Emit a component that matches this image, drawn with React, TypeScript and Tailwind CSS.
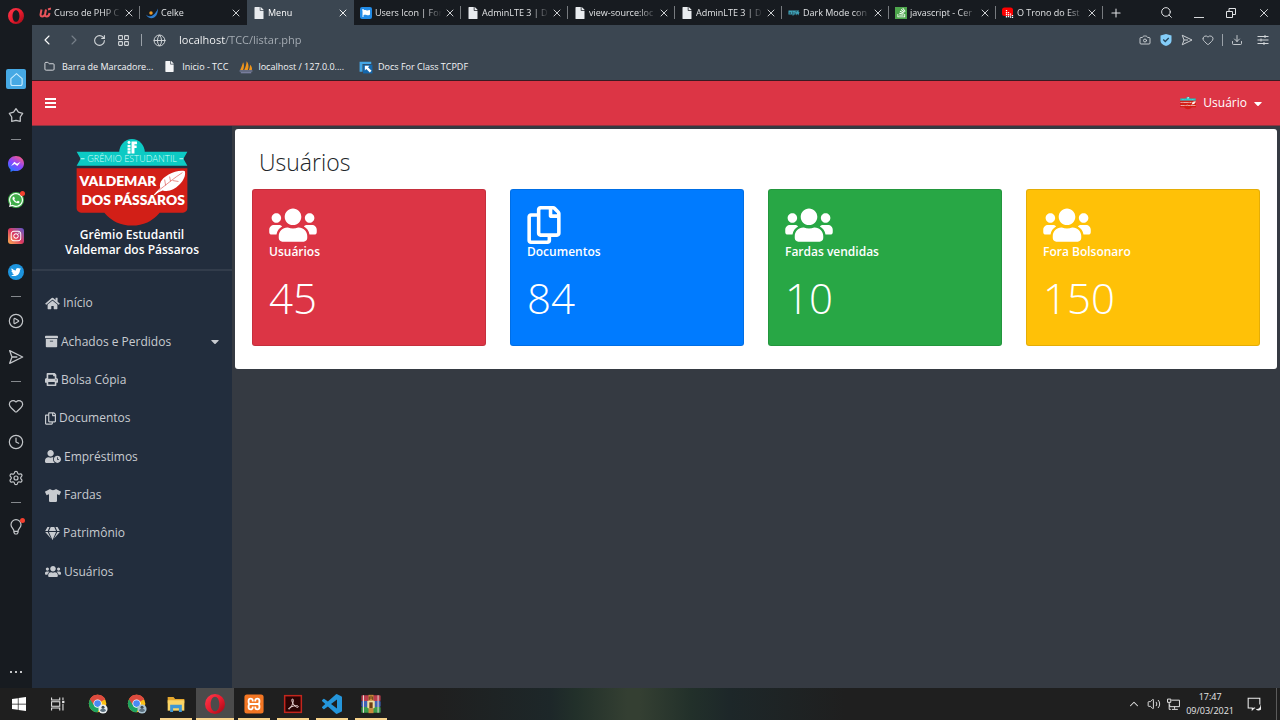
import type { ReactNode } from "react";
import {
  FaArchive,
  FaCaretDown,
  FaFile,
  FaFlag,
  FaGem,
  FaHome,
  FaInstagram,
  FaPrint,
  FaRegCopy,
  FaStackOverflow,
  FaTshirt,
  FaTwitter,
  FaUserClock,
  FaUsers,
  FaWhatsapp,
} from "react-icons/fa";
import {
  Camera,
  ChevronLeft,
  ChevronRight,
  ChevronUp,
  CirclePlay,
  Clock,
  Download,
  Folder,
  Globe,
  Heart,
  LayoutGrid,
  Plus,
  RotateCw,
  Search,
  Settings,
  Volume2,
  X,
} from "lucide-react";

/* ---------- drawings ---------- */

function OperaLogo({ className }: { className: string }) {
  return (
    <svg viewBox="0 0 24 24" className={className} aria-hidden="true">
      <defs>
        <linearGradient id="operaRed" x1="0" y1="0" x2="1" y2="1">
          <stop offset="0" stopColor="#ff3b4e" />
          <stop offset="0.5" stopColor="#ea1c2f" />
          <stop offset="1" stopColor="#9c0914" />
        </linearGradient>
      </defs>
      <path
        fillRule="evenodd"
        fill="url(#operaRed)"
        d="M12 0a12 12 0 1 0 0 24a12 12 0 0 0 0-24ZM12 3.2c3 0 5.2 3.800 5.200 8.800s-2.200 8.800-5.200 8.800s-5.200-3.800-5.200-8.800s2.200-8.800 5.200-8.800Z"
      />
    </svg>
  );
}

function GremioLogo({ className }: { className: string }) {
  return (
    <svg viewBox="0 0 112 90" className={className} role="img" aria-label="Grêmio Estudantil Valdemar dos Pássaros">
      <path d="M43 15a13 14 0 0 1 26 0Z" fill="#0ccac4" />
      <path d="M0 14h112l-4 7l4 7H0l4-7Z" fill="#0ccac4" />
      <path d="M4 21h4M104 21h4" stroke="#c9fffb" strokeWidth="1" />
      <g fill="#fff">
        <circle cx="53" cy="4.500" r="1.500" />
        <rect x="51.500" y="7" width="3" height="2.500" />
        <rect x="51.500" y="10.200" width="3" height="2.500" />
        <rect x="51.500" y="13.300" width="3" height="2.500" />
        <path d="M55.500 3.500h5.500v2.700h-2.500v1.300h2.200v2.500h-2.200v5.800h-3Z" />
      </g>
      <text x="56" y="24.500" textAnchor="middle" fontSize="9" fontWeight="300" fill="#d9fffc" className="font-['Lato',sans-serif]">
        GRÊMIO ESTUDANTIL
      </text>
      <path d="M0 30.500h112V71a4.500 4.500 0 0 1-4.500 4.500H84Q73 88.500 56 88.500T28 75.500H4.500A4.500 4.500 0 0 1 0 71Z" fill="#d21f17" />
      <text x="3" y="48.500" fontSize="14" fontWeight="800" fill="#fff" className="font-['Lato','Open_Sans',sans-serif]">
        VALDEMAR
      </text>
      <text x="5" y="68" fontSize="14" fontWeight="800" fill="#fff" className="font-['Lato','Open_Sans',sans-serif]">
        DOS PÁSSAROS
      </text>
      <path
        fill="#fff"
        d="M78 57.500C81 54 83 52 84.500 50.500C83 44 88 40 93 37C98 34 105 32.500 109.500 33.500C110.500 38 108 43 104 47C99 52 93 55 87 53C84 54 81 56 79 58Z"
      />
      <path d="M83 53C91 47 99 40 107 35M90 48l-1-6M95 44l-1-5M97 43l6 1" stroke="#d21f17" strokeWidth=".5" fill="none" />
    </svg>
  );
}

function MessengerIcon() {
  return (
    <svg viewBox="0 0 24 24" className="size-4" aria-hidden="true">
      <defs>
        <linearGradient id="msgr" x1="0.200" y1="1" x2="0.800" y2="0">
          <stop offset="0" stopColor="#1a7cff" />
          <stop offset="0.500" stopColor="#8a46ff" />
          <stop offset="1" stopColor="#ff5c80" />
        </linearGradient>
      </defs>
      <path d="M12 0C5.200 0 0 5 0 11.600c0 3.500 1.400 6.500 3.800 8.500V24l3.700-2c1.400.4 2.900.6 4.500.6c6.800 0 12-4.900 12-11.300S18.800 0 12 0Z" fill="url(#msgr)" />
      <path d="M4.500 15l5-6.500l4 3l5.500-3l-5 6.500l-4-3Z" fill="#fff" />
    </svg>
  );
}

function StarOutline() {
  return (
    <svg viewBox="0 0 24 24" className="size-4" fill="none" stroke="currentColor" strokeWidth="1.900" strokeLinejoin="round" aria-hidden="true">
      <path d="M12 2.500l3.600 5.200l6.400 1.800l-3.600 5.500v6.500l-6.400-1.400l-6.400 1.400v-6.500L2 9.500l6.400-1.800Z" />
    </svg>
  );
}

function SendOutline({ className }: { className: string }) {
  return (
    <svg viewBox="0 0 24 24" className={className} fill="none" stroke="currentColor" strokeWidth="1.900" strokeLinejoin="round" aria-hidden="true">
      <path d="M2.500 2.500L22 12L2.500 21.500L6 12ZM6 12h8" />
    </svg>
  );
}

function BulbOutline() {
  return (
    <svg viewBox="0 0 24 24" className="size-4" fill="none" stroke="currentColor" strokeWidth="1.800" strokeLinejoin="round" aria-hidden="true">
      <path d="M9 18.500C9 15 4.500 13 4.500 8.500a7.500 7.500 0 0 1 15 0C19.500 13 15 15 15 18.500Z" />
      <path d="M9 18.500v2l1.500 2h3l1.500-2v-2" />
    </svg>
  );
}

function ShieldCheck() {
  return (
    <svg viewBox="0 0 24 24" className="size-3" aria-hidden="true">
      <path d="M12 0L23 3v10c0 6-5 9-11 11C6 22 1 19 1 13V3Z" fill="#84cdf8" />
      <path d="M6.500 11l4 4l7-7" fill="none" stroke="#26455c" strokeWidth="2.500" />
    </svg>
  );
}

function EasySetup() {
  return (
    <svg viewBox="0 0 24 24" className="size-3" fill="none" stroke="currentColor" strokeWidth="2" aria-hidden="true">
      <path d="M1 5h22M1 12h22M1 19h22M16 2v6M8 9v6M14 16v6" />
    </svg>
  );
}

function UdemyIcon() {
  return (
    <svg viewBox="0 0 24 24" className="size-3" fill="none" stroke="#e8545a" strokeWidth="4" aria-hidden="true">
      <path d="M5 5L3 15q0 4 3.500 4q4 0 5.500-5l2-9M14 6l-2 9q0 4 3.500 4q4.500 0 5.500-7M18 5l6-2" />
    </svg>
  );
}

function CelkeIcon() {
  return (
    <svg viewBox="0 0 24 24" className="size-3" aria-hidden="true">
      <path d="M0 15C5 21 16 21 24 3C24 14 19 23 10 22.500C5 22 2 19 0 15Z" fill="#2f7fd0" />
      <circle cx="10" cy="12" r="3.500" fill="#ee9a25" />
    </svg>
  );
}

function ChromeIcon({ badge }: { badge: string }) {
  return (
    <svg viewBox="0 0 24 24" className="size-5" aria-hidden="true">
      <circle cx="11.500" cy="11.500" r="10.500" fill="#fbc116" />
      <path d="M11.500 11.500L2.400 6.300A10.500 10.500 0 0 1 20.600 6.300Z" fill="#dd4b3e" />
      <path d="M11.500 11.500L2.400 6.300A10.500 10.500 0 0 0 11.500 22l4-7Z" fill="#1da462" />
      <path d="M11.500 6.500h9.200A10.500 10.500 0 0 0 2.400 6.300l4.500 7Z" fill="#dd4b3e" />
      <circle cx="11.500" cy="11.500" r="5" fill="#fff" />
      <circle cx="11.500" cy="11.500" r="4" fill="#4a8af4" />
      <circle cx="18" cy="18" r="5.500" fill={badge} />
      <path d="M14.500 20c0-3 7-3 7 0a5 5 0 0 1-7 0Z" fill="#5c7180" />
      <circle cx="18" cy="16" r="1.800" fill="#394954" />
    </svg>
  );
}

function ExplorerIcon() {
  return (
    <svg viewBox="0 0 24 24" className="size-5" aria-hidden="true">
      <path d="M2 3.500h7l2 2.500h11v5H2Z" fill="#e5a72d" />
      <path d="M2 7.500h20V20H2Z" fill="#fbd566" />
      <path d="M5 21.500V13h14v8.500h-3.500V17h-7v4.500Z" fill="#3f97d3" />
    </svg>
  );
}

function XamppIcon() {
  return (
    <svg viewBox="0 0 24 24" className="size-5" aria-hidden="true">
      <rect x="0.500" y="0.500" width="23" height="23" rx="3" fill="#f37623" />
      <path
        d="M10.500 9V8a2.500 2.500 0 0 0-5 0v1.500Q5.500 12 8 12Q5.500 12 5.500 14.500V16a2.500 2.500 0 0 0 5 0v-1M13.500 9V8a2.500 2.500 0 0 1 5 0v1.500Q18.500 12 16 12Q18.500 12 18.500 14.500V16a2.500 2.500 0 0 1-5 0v-1M8 12h8"
        fill="none"
        stroke="#fff"
        strokeWidth="2.200"
      />
    </svg>
  );
}

function AcrobatIcon() {
  return (
    <svg viewBox="0 0 24 24" className="size-5" fill="none" aria-hidden="true">
      <rect x="2" y="2" width="20" height="20" fill="#2b0404" stroke="#c3261d" strokeWidth="1.800" />
      <path
        d="M11.500 6c-1.500 0-1 3 .5 5.500s4 4.500 5.500 4.500s1.200-2-1-2s-6 .8-8 2s-2.300 2.500-1 2c2-1 4.500-6.500 4.800-9.500c.1-1.600-.2-2.500-.8-2.500Z"
        stroke="#f1dada"
        strokeWidth="1.200"
      />
    </svg>
  );
}

function VSCodeIcon() {
  return (
    <svg viewBox="0 0 24 24" className="size-5" fill="#2596db" aria-hidden="true">
      <path d="M23.150 2.587L18.210.210a1.494 1.494 0 0 0-1.705.290l-9.460 8.630l-4.120-3.128a.999.999 0 0 0-1.276.057L.327 7.261A1 1 0 0 0 .326 8.740L3.899 12L.326 15.260a1 1 0 0 0 .001 1.479L1.650 17.940a.999.999 0 0 0 1.276.057l4.120-3.128l9.460 8.630a1.492 1.492 0 0 0 1.704.290l4.942-2.377A1.500 1.500 0 0 0 24 20.060V3.939a1.500 1.500 0 0 0-.850-1.352zm-5.146 14.861L10.826 12l7.178-5.448v10.896z" />
    </svg>
  );
}

function WinrarIcon() {
  return (
    <svg viewBox="0 0 24 24" className="size-5" aria-hidden="true">
      <rect x="0.500" y="1.500" width="23" height="7" rx="1" fill="#b93b4d" />
      <rect x="0.500" y="8.500" width="23" height="7" rx="1" fill="#3f62b5" />
      <rect x="0.500" y="15.500" width="23" height="7" rx="1" fill="#3b9b4c" />
      <path d="M3 1.500v21M20.500 1.500v21" stroke="#e4d6cf" strokeWidth="1.200" />
      <rect x="9" y="1" width="6" height="22" fill="#c98a3a" />
      <rect x="7.500" y="8" width="9" height="9" rx="1" fill="#f0dca0" />
      <path d="M10 7v-4M12 6v-4M14 7v-4" stroke="#573417" strokeWidth="1" />
      <rect x="10" y="10" width="4" height="7" fill="#6f3f12" />
    </svg>
  );
}

function WindowsIcon() {
  return (
    <svg viewBox="0 0 24 24" className="size-[14px]" fill="#fff" aria-hidden="true">
      <path d="M0 3.500L10 2v9.500H0ZM11.200 1.800L24 0v11.500H11.200ZM0 12.700h10V22L0 20.600ZM11.200 12.700H24V24l-12.800-1.800Z" />
    </svg>
  );
}

function TaskViewIcon() {
  return (
    <svg viewBox="0 0 24 24" className="size-[14px]" fill="none" stroke="#e8e8e8" strokeWidth="1.800" aria-hidden="true">
      <path d="M1 1v4h14V1M1 23v-4h14v4M1 8h14v8H1ZM20.500 1v4M20.500 12v11" />
      <rect x="19" y="6.500" width="4" height="4" fill="#e8e8e8" stroke="none" />
    </svg>
  );
}

function NetworkIcon() {
  return (
    <svg viewBox="0 0 24 24" className="size-[13px]" fill="none" stroke="currentColor" strokeWidth="1.800" aria-hidden="true">
      <path d="M8 4h15v12H5v-4M14 16v4M9 21h11M1 2h6v6H1ZM4 8v13h3" />
    </svg>
  );
}

function NotificationIcon() {
  return (
    <svg viewBox="0 0 24 24" className="size-[14px]" aria-hidden="true">
      <path d="M14 19h-2l-3 3v-3H2V2h20v11" fill="none" stroke="#eee" strokeWidth="1.800" />
      <path d="M23 13a5.500 5.500 0 1 1-8 7a6 6 0 0 0 8-7Z" fill="#eee" />
    </svg>
  );
}

/* ---------- data ---------- */

type Tab = { title: string; icon: ReactNode; active?: boolean };

const pageIcon = <FaFile className="size-3 text-[#e9ecef]" />;

const tabs: Tab[] = [
  { title: "Curso de PHP C", icon: <UdemyIcon /> },
  { title: "Celke", icon: <CelkeIcon /> },
  { title: "Menu", icon: pageIcon, active: true },
  {
    title: "Users Icon | For",
    icon: (
      <span className="flex size-3 items-center justify-center rounded-[2px] bg-[#228be6]">
        <FaFlag className="size-2 text-white" />
      </span>
    ),
  },
  { title: "AdminLTE 3 | D", icon: pageIcon },
  { title: "view-source:loc", icon: pageIcon },
  { title: "AdminLTE 3 | D", icon: pageIcon },
  {
    title: "Dark Mode con",
    icon: (
      <svg viewBox="0 0 24 24" className="size-3" fill="none" stroke="#3fa3b8" strokeWidth="2.200" aria-hidden="true">
        <path d="M7 7v7H2v-4h5M10 17v-7h4v4h-4M16 10l1.500 4l1.500-4l1.500 4L22 10M1 8h21" />
      </svg>
    ),
  },
  {
    title: "javascript - Cer",
    icon: (
      <span className="flex size-3 items-center justify-center bg-[#4da64c]">
        <FaStackOverflow className="size-[11px] text-white" />
      </span>
    ),
  },
  {
    title: "O Trono do Est",
    icon: (
      <svg viewBox="0 0 24 24" className="size-3" aria-hidden="true">
        <rect x="0" y="1" width="22" height="17" rx="5" fill="#f00" />
        <path d="M9 6v16M13 10v12M17 13v9M21 16v6" stroke="#fff" strokeWidth="2.600" strokeDasharray="2.600 1.200" />
      </svg>
    ),
  },
];

type Item = { label: string; icon: ReactNode; dropdown?: boolean };

const navItems: Item[] = [
  { label: "Início", icon: <FaHome className="h-[13px] w-[15px]" /> },
  { label: "Achados e Perdidos", icon: <FaArchive className="size-[13px]" />, dropdown: true },
  { label: "Bolsa Cópia", icon: <FaPrint className="size-[13px]" /> },
  { label: "Documentos", icon: <FaRegCopy className="h-[13px] w-[11px]" /> },
  { label: "Empréstimos", icon: <FaUserClock className="h-[13px] w-4" /> },
  { label: "Fardas", icon: <FaTshirt className="h-[13px] w-4" /> },
  { label: "Patrimônio", icon: <FaGem className="h-[13px] w-[15px]" /> },
  { label: "Usuários", icon: <FaUsers className="h-[13px] w-4" /> },
];

const usersIcon = <FaUsers className="h-[38px] w-12" />;

const cards = [
  { label: "Usuários", value: 45, icon: usersIcon, tone: "bg-[#dc3545]" },
  { label: "Documentos", value: 84, icon: <FaRegCopy className="h-[38px] w-[34px]" />, tone: "bg-[#007bff]" },
  { label: "Fardas vendidas", value: 10, icon: usersIcon, tone: "bg-[#28a745]" },
  { label: "Fora Bolsonaro", value: 150, icon: usersIcon, tone: "bg-[#ffc107]" },
];

/* ---------- browser frame ---------- */

function RailButton({ label, dot, children }: { label: string; dot?: boolean; children: ReactNode }) {
  return (
    <button type="button" aria-label={label} className="relative flex h-9 w-full items-center justify-center">
      {children}
      {dot && <span className="absolute top-[9px] right-[7px] size-[5px] rounded-full bg-[#f4402f]" />}
    </button>
  );
}

function RailDash() {
  return (
    <div className="flex h-[13px] w-full items-center justify-center">
      <span className="h-px w-[10px] bg-[#85898d]" />
    </div>
  );
}

function Rail() {
  return (
    <aside className="flex w-8 shrink-0 flex-col items-center bg-[#171b20] text-[#c3c6c9]">
      <div className="flex h-[61px] items-start pt-2">
        <OperaLogo className="size-4" />
      </div>
      <RailButton label="Início rápido">
        <span className="flex size-5 items-center justify-center rounded-[2px] bg-[#46a9e4] text-[#c9ecff]">
          <svg viewBox="0 0 24 24" className="size-[15px]" fill="none" stroke="currentColor" strokeWidth="1.800" strokeLinejoin="round" aria-hidden="true">
            <path d="M3 10.500L12 2.500l9 8v8.500a2.500 2.500 0 0 1-2.500 2.500h-13A2.500 2.500 0 0 1 3 19Z" />
          </svg>
        </span>
      </RailButton>
      <RailButton label="Favoritos"><StarOutline /></RailButton>
      <RailDash />
      <RailButton label="Messenger"><MessengerIcon /></RailButton>
      <RailButton label="WhatsApp" dot>
        <span className="flex size-4 items-center justify-center rounded-full bg-[#3fae49]">
          <FaWhatsapp className="size-4 text-white" />
        </span>
      </RailButton>
      <RailButton label="Instagram">
        <span className="flex size-4 items-center justify-center rounded-[3px] bg-linear-to-tr from-[#fdb04a] via-[#d9335f] to-[#5a4fcf]">
          <FaInstagram className="size-3 text-white" />
        </span>
      </RailButton>
      <RailButton label="Twitter">
        <span className="flex size-4 items-center justify-center rounded-full bg-[#1d94dd]">
          <FaTwitter className="size-[10px] text-white" />
        </span>
      </RailButton>
      <RailDash />
      <RailButton label="Player">
        <CirclePlay className="size-4" strokeWidth={1.8} />
      </RailButton>
      <RailButton label="My Flow"><SendOutline className="size-4" /></RailButton>
      <RailDash />
      <RailButton label="Marcadores"><Heart className="size-4" strokeWidth={1.8} /></RailButton>
      <RailButton label="Histórico"><Clock className="size-4" strokeWidth={1.8} /></RailButton>
      <RailButton label="Configurações"><Settings className="size-4" strokeWidth={1.8} /></RailButton>
      <RailDash />
      <RailButton label="Dicas" dot><BulbOutline /></RailButton>
      <button type="button" aria-label="Mais" className="mt-auto flex h-8 w-full items-center justify-center gap-[3px]">
        <span className="size-[2px] rounded-full bg-white" />
        <span className="size-[2px] rounded-full bg-white" />
        <span className="size-[2px] rounded-full bg-white" />
      </button>
    </aside>
  );
}

function TabStrip() {
  return (
    <div className="flex h-[25px] items-stretch bg-[#171b20] pl-px text-[#e0e2e4]">
      <div role="tablist" className="flex min-w-0">
        {tabs.map((tab, i) => {
          const divider = !tab.active && i !== 1;
          return (
            <div
              key={i}
              className={`flex w-[107px] min-w-0 items-center pl-[6px] ${tab.active ? "bg-[#3b4651] text-white" : ""}`}
            >
              <button type="button" role="tab" aria-selected={!!tab.active} className="flex min-w-0 flex-1 items-center gap-[3px]">
                <span className="shrink-0">{tab.icon}</span>
                <span className="flex-1 overflow-hidden mask-r-from-75% text-left text-[9px] leading-[14px] whitespace-nowrap">{tab.title}</span>
              </button>
              <button type="button" aria-label={`Fechar ${tab.title}`} className="mr-1 ml-[2px] shrink-0">
                <X className="size-3" strokeWidth={1.8} />
              </button>
              <span className={`h-[13px] w-px ${divider ? "bg-[#777b7f]" : ""}`} />
            </div>
          );
        })}
      </div>
      <button type="button" aria-label="Nova guia" className="px-[6px]"><Plus className="size-[14px]" strokeWidth={1.8} /></button>
      <div className="ml-auto flex items-center gap-5 pr-[9px]">
        <button type="button" aria-label="Pesquisar"><Search className="size-[13px]" strokeWidth={1.8} /></button>
        <button type="button" aria-label="Minimizar" className="flex h-3 w-3 items-end justify-center"><span className="mb-px h-px w-[10px] bg-[#d5d7d9]" /></button>
        <button type="button" aria-label="Restaurar">
          <svg viewBox="0 0 12 12" className="size-3" fill="none" stroke="currentColor" aria-hidden="true">
            <path d="M1.500 4.500h6v6h-6ZM4 4.500V1.500h6.500v6H7.500" />
          </svg>
        </button>
        <button type="button" aria-label="Fechar janela"><X className="size-[14px]" strokeWidth={1.6} /></button>
      </div>
    </div>
  );
}

function AddressBar() {
  return (
    <div className="flex h-[30px] items-center bg-[#3b4651] pr-[11px] pl-[7px] text-[#d3d7da]">
      <div className="flex items-center gap-[11px]">
        <button type="button" aria-label="Voltar"><ChevronLeft className="size-4 text-white" strokeWidth={1.6} /></button>
        <button type="button" aria-label="Avançar"><ChevronRight className="size-4 text-[#77808a]" strokeWidth={1.6} /></button>
        <button type="button" aria-label="Recarregar"><RotateCw className="size-[13px]" strokeWidth={2} /></button>
        <button type="button" aria-label="Speed Dial"><LayoutGrid className="size-[13px]" strokeWidth={2} /></button>
      </div>
      <span className="mx-[11px] h-3 w-px bg-[#9aa1a8]" />
      <Globe className="size-[13px]" strokeWidth={1.8} />
      <input
        aria-label="Endereço"
        defaultValue="localhost/TCC/listar.php"
        className="ml-[13px] min-w-0 flex-1 bg-[linear-gradient(90deg,#ffffff_46px,#a9b0b7_46px)] bg-clip-text text-[11px] text-transparent outline-none"
      />
      <div className="flex items-center gap-[9px]">
        <button type="button" aria-label="Capturar"><Camera className="size-3" strokeWidth={1.8} /></button>
        <button type="button" aria-label="Bloqueador"><ShieldCheck /></button>
        <button type="button" aria-label="Enviar"><SendOutline className="size-3" /></button>
        <button type="button" aria-label="Curtir"><Heart className="size-3" strokeWidth={1.8} /></button>
      </div>
      <span className="mx-2 h-3 w-px bg-[#9aa1a8]" />
      <div className="flex items-center gap-[14px]">
        <button type="button" aria-label="Downloads"><Download className="size-3" strokeWidth={1.8} /></button>
        <button type="button" aria-label="Configuração fácil"><EasySetup /></button>
      </div>
    </div>
  );
}

function Bookmarks() {
  return (
    <nav aria-label="Marcadores" className="flex h-[26px] items-center gap-[11px] border-b border-[#3a1a22] bg-[#3b4651] pb-0.5 pl-3 text-[9px] text-[#f3f4f6]">
      <a href="#barra" className="flex items-center gap-[7px]"><Folder className="size-[11px]" strokeWidth={1.8} />Barra de Marcadore...</a>
      <a href="#inicio" className="flex items-center gap-[7px]"><FaFile className="size-[11px]" />Inicio - TCC</a>
      <a href="#pma" className="flex items-center gap-[5px]">
        <svg viewBox="0 0 24 24" className="size-[14px]" aria-hidden="true">
          <path d="M2 17C4 13 6 8 7 4c2 3 2 9 0 13ZM9 17c2-4 4-10 4-15c4 4 4 11 2 15ZM17 17c1-3 2-6 2-9c3 3 4 6 3 9Z" fill="#f0951b" />
          <path d="M1 19h22M3 22h18" stroke="#8d90b5" strokeWidth="1.800" />
        </svg>
        localhost / 127.0.0....
      </a>
      <a href="#tcpdf" className="flex items-center gap-[5px] pl-1">
        <svg viewBox="0 0 24 24" className="size-[14px]" aria-hidden="true">
          <path d="M1 3h20v4H6v13H1Z" fill="#45a7e6" />
          <path d="M7 8h16v15H7Z" fill="#1467ad" />
          <path d="M10 10h8l-2.500 2.500l6 6l-3 3l-6-6L10 18Z" fill="#fff" />
        </svg>
        Docs For Class TCPDF
      </a>
    </nav>
  );
}

/* ---------- admin page ---------- */

function TopBar() {
  return (
    <header className="flex h-[45px] items-center justify-between border-b border-[#8f3340] bg-[#dc3545] px-[13px] text-white">
      <button type="button" aria-label="Alternar menu" className="flex w-[11px] flex-col gap-[2px]">
        <span className="h-[2px] bg-white" />
        <span className="h-[2px] bg-white" />
        <span className="h-[2px] bg-white" />
      </button>
      <button type="button" className="flex items-center gap-[7px] pr-[5px] text-[12px]">
        <GremioLogo className="size-4" />
        Usuário
        <FaCaretDown className="h-[13px] w-2" />
      </button>
    </header>
  );
}

function Sidebar() {
  return (
    <aside className="w-[200px] shrink-0 bg-[#222d3d]">
      <div className="flex flex-col items-center border-b-2 border-[#323c4b] pt-3 pb-3">
        <GremioLogo className="h-[89px] w-28" />
        <p className="text-center text-[12px] leading-[15px] font-semibold text-white">
          Grêmio Estudantil
          <br />
          Valdemar dos Pássaros
        </p>
      </div>
      <nav aria-label="Menu" className="pt-[13px] text-[12px] text-[#c8cbd0]">
        <ul className="grid h-[307px] auto-rows-fr">
          {navItems.map((item) => (
            <li key={item.label} className="flex">
              <a href={`#${item.label}`} className="flex flex-1 items-center gap-[3px] px-[13px]">
                {item.icon}
                {item.label}
                {item.dropdown && <FaCaretDown className="ml-auto h-[13px] w-2" />}
              </a>
            </li>
          ))}
        </ul>
      </nav>
    </aside>
  );
}

function Dashboard() {
  return (
    <main className="min-w-0 flex-1 bg-[#353a42] p-[3px]">
      <section className="rounded-[3px] bg-white px-[17px] pt-[14px] pb-[23px]">
        <h1 className="pl-[7px] text-[23px] leading-[38px] font-light text-[#212529]">Usuários</h1>
        <div className="mt-2 grid grid-cols-4 gap-6">
          {cards.map((card) => (
            <article key={card.label} className={`rounded-[3px] border border-black/10 px-4 pt-4 pb-[14px] text-white ${card.tone}`}>
              {card.icon}
              <h2 className="text-[12px] leading-4 font-semibold">{card.label}</h2>
              <p className="mt-1 text-[42px] leading-[67px] font-light">{card.value}</p>
            </article>
          ))}
        </div>
      </section>
    </main>
  );
}

/* ---------- taskbar ---------- */

function TaskButton({ label, open, active, children }: { label: string; open?: boolean; active?: boolean; children: ReactNode }) {
  return (
    <button
      type="button"
      aria-label={label}
      className={`flex h-8 w-[38px] flex-col items-center ${active ? "bg-[#4b4b4b]" : ""}`}
    >
      <span className="flex flex-1 items-center pt-[2px]">{children}</span>
      <span className={`h-[2px] ${active ? "w-full" : "w-8"} ${open ? "bg-[#f8d48c]" : ""}`} />
    </button>
  );
}

function Taskbar() {
  return (
    <footer className="flex h-8 shrink-0 items-center gap-[2px] bg-[#1f1f1f] bg-[linear-gradient(90deg,#1f1f1f_34%,#1d2729_43%,#22302a_45%,#343f32_49%,#343f32_50%,#22302a_54%,#1d2729_57%,#1f1f1f_66%)] text-[#e6e6e6]">
      <div className="flex gap-px">
        <TaskButton label="Iniciar"><WindowsIcon /></TaskButton>
        <TaskButton label="Visão de tarefas"><TaskViewIcon /></TaskButton>
      </div>
      <div className="flex gap-px">
        <TaskButton label="Chrome"><ChromeIcon badge="#e9eef0" /></TaskButton>
        <TaskButton label="Chrome perfil 2"><ChromeIcon badge="#a9c3d2" /></TaskButton>
        <TaskButton label="Explorador" open><ExplorerIcon /></TaskButton>
        <TaskButton label="Opera" open active><OperaLogo className="size-5" /></TaskButton>
        <TaskButton label="XAMPP" open><XamppIcon /></TaskButton>
        <TaskButton label="Acrobat" open><AcrobatIcon /></TaskButton>
        <TaskButton label="VS Code" open><VSCodeIcon /></TaskButton>
        <TaskButton label="WinRAR" open><WinrarIcon /></TaskButton>
      </div>
      <div className="ml-auto flex h-full items-center gap-[6px]">
        <ChevronUp className="size-[14px]" strokeWidth={1.8} />
        <Volume2 className="size-[14px]" strokeWidth={1.6} />
        <NetworkIcon />
        <time dateTime="2021-03-09T17:47" className="text-center text-[9px] leading-[14px]">
          17:47
          <br />
          09/03/2021
        </time>
        <span className="pl-[7px]"><NotificationIcon /></span>
        <span className="mr-[3px] ml-[9px] h-full w-px bg-[#5b5b5b]" />
      </div>
    </footer>
  );
}

export default function App() {
  return (
    <div className="flex min-h-screen flex-col bg-[#1f1f1f] font-['Open_Sans','Noto_Sans',sans-serif]">
      <div className="flex flex-1">
        <Rail />
        <div className="flex min-w-0 flex-1 flex-col">
          <TabStrip />
          <AddressBar />
          <Bookmarks />
          <TopBar />
          <div className="flex flex-1">
            <Sidebar />
            <Dashboard />
          </div>
        </div>
      </div>
      <Taskbar />
    </div>
  );
}
